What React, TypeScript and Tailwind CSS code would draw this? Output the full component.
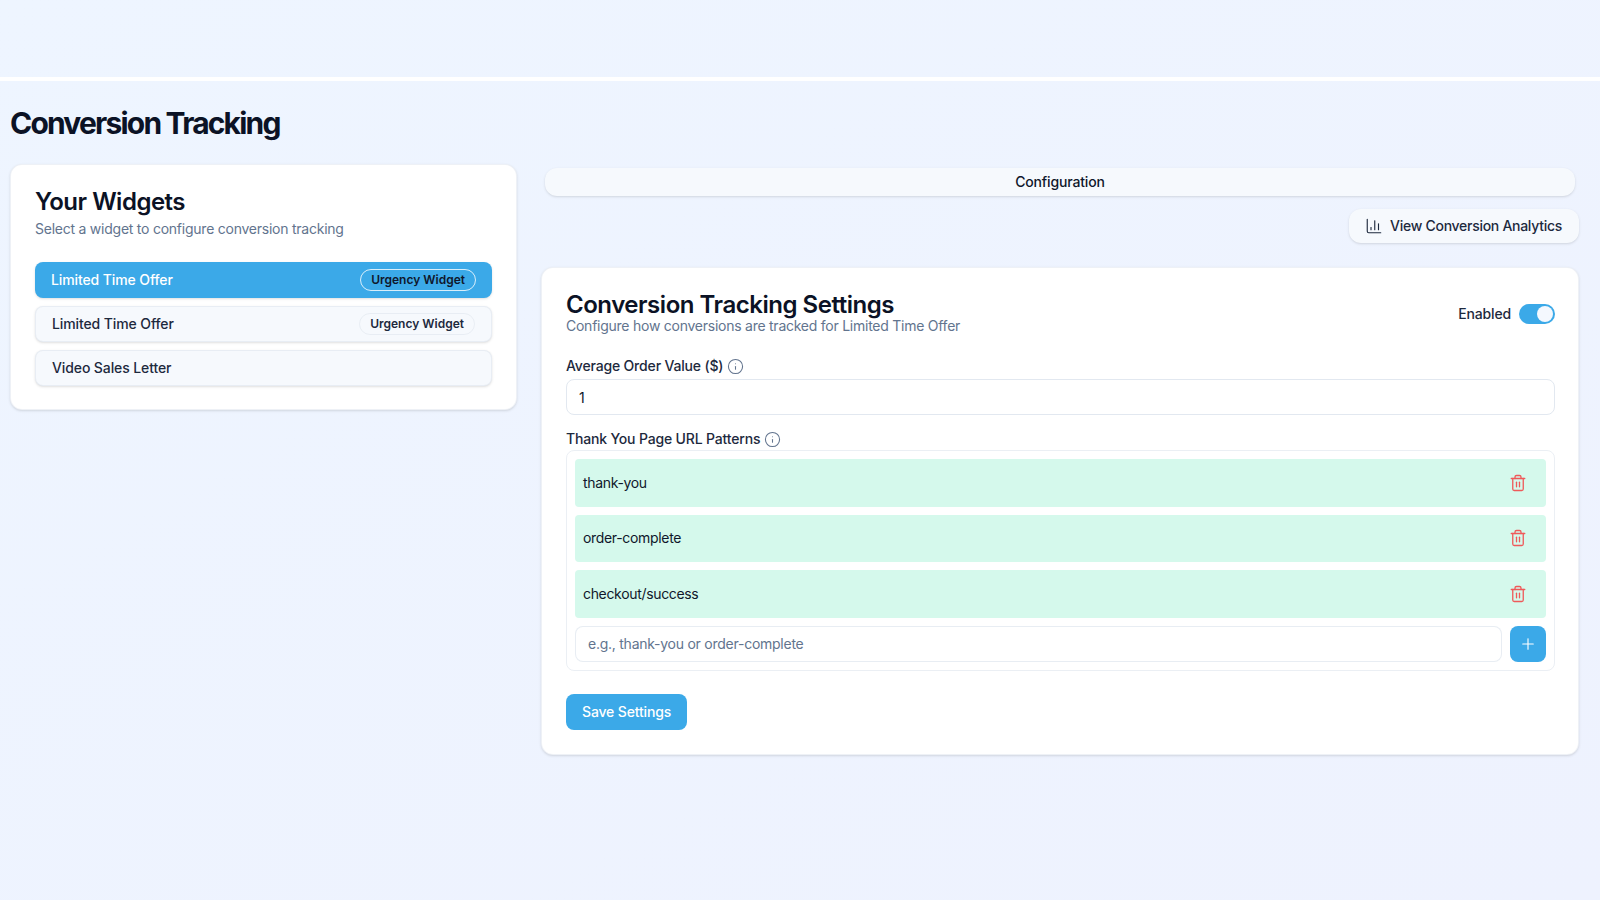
import { ChartColumn, Info, Plus, Trash2 } from "lucide-react";

const patterns = ["thank-you", "order-complete", "checkout/success"];

const FieldLabel = ({ text }: { text: string }) => (
  <div className="flex h-[18px] items-center gap-1 text-sm font-medium tracking-[-0.17px] text-slate-800">
    <span>{text}</span>
    <Info className="size-[17px] text-slate-500" strokeWidth={1.5} />
  </div>
);

const WidgetRow = ({
  name,
  badge,
  active,
}: {
  name: string;
  badge?: string;
  active?: boolean;
}) => (
  <div
    className={
      active
        ? "flex h-9 items-center justify-between rounded-lg bg-[#3ba9e8] px-4 text-sm font-medium tracking-[-0.11px] text-white shadow-sm"
        : "flex h-9 items-center justify-between rounded-lg border border-slate-200/70 bg-[#f6f9fd] px-4 text-sm font-medium tracking-[-0.11px] text-slate-800 shadow-sm"
    }
  >
    <span>{name}</span>
    {badge && (
      <span
        className={
          active
            ? "flex h-[22px] items-center rounded-full border border-white/80 px-[10px] text-xs font-semibold tracking-normal text-slate-900"
            : "flex h-[22px] items-center rounded-full border border-slate-200/70 px-[10px] text-xs font-semibold tracking-normal text-slate-800"
        }
      >
        {badge}
      </span>
    )}
  </div>
);

export default function App() {
  return (
    <div className="min-h-[900px] bg-gradient-to-br from-[#eef5ff] to-[#eef2fe] font-['Inter',sans-serif] text-slate-900">
      <header className="h-[81px] border-b-4 border-white" />
      <main className="pl-[10px] pr-[21px]">
        <h1 className="mt-[24px] text-3xl leading-9 font-bold tracking-[-1.8px] text-[#0b1225]">
          Conversion Tracking
        </h1>
        <div className="mt-[23px] grid grid-cols-[507px_1fr] items-start gap-6">
          <section className="rounded-xl border border-slate-200/60 bg-white px-6 pt-[25px] pb-[23px] shadow-sm">
            <h2 className="text-2xl leading-[24px] font-semibold tracking-[-0.5px] text-[#0b1225]">
              Your Widgets
            </h2>
            <p className="mt-[5px] text-sm leading-5 tracking-[-0.24px] text-slate-500">
              Select a widget to configure conversion tracking
            </p>
            <div className="mt-[23px] flex flex-col gap-2">
              <WidgetRow name="Limited Time Offer" badge="Urgency Widget" active />
              <WidgetRow name="Limited Time Offer" badge="Urgency Widget" />
              <WidgetRow name="Video Sales Letter" />
            </div>
          </section>

          <div className="mt-[4px] flex flex-col">
            <div className="mx-1 flex h-7 items-center justify-center rounded-xl bg-[#f6f9fd] text-sm font-medium tracking-[-0.15px] text-slate-900 shadow-sm">
              Configuration
            </div>
            <div className="mt-[13px] flex justify-end">
              <button className="flex h-[34px] items-center gap-[7px] rounded-xl bg-[#f6f9fd] pl-4 pr-[17px] text-sm font-medium tracking-[-0.28px] text-slate-800 shadow-sm">
                <ChartColumn className="size-[18px]" strokeWidth={1.5} />
                View Conversion Analytics
              </button>
            </div>
            <section className="mt-6 rounded-xl border border-slate-200/60 bg-white pl-6 pr-[23px] pt-[25px] pb-6 shadow-sm">
              <div className="flex items-center justify-between">
                <div>
                  <h2 className="text-2xl leading-[23px] font-semibold tracking-[-0.47px] text-[#0b1225]">
                    Conversion Tracking Settings
                  </h2>
                  <p className="text-sm leading-5 tracking-[-0.25px] text-slate-500">
                    Configure how conversions are tracked for Limited Time Offer
                  </p>
                </div>
                <div className="mb-[2px] flex items-center gap-2">
                  <span className="text-sm font-medium tracking-[-0.15px] text-slate-800">
                    Enabled
                  </span>
                  <span className="flex h-5 w-9 items-center justify-end rounded-full bg-[#3ba9e8] p-[2px]">
                    <span className="size-4 rounded-full bg-[#f4f8fe]" />
                  </span>
                </div>
              </div>

              <div className="mt-[21px]">
                <FieldLabel text="Average Order Value ($)" />
                <input
                  readOnly
                  value="1"
                  className="mt-[4px] block h-9 w-full rounded-lg border border-slate-200 bg-white px-3 text-sm text-slate-900"
                />
              </div>

              <div className="mt-[15px]">
                <FieldLabel text="Thank You Page URL Patterns" />
                <div className="mt-[2px] flex flex-col gap-2 rounded-lg border border-slate-200/70 p-2">
                  {patterns.map((pattern) => (
                    <div
                      key={pattern}
                      className="flex h-[47.5px] items-center justify-between rounded bg-[#d5f9ec] pl-2 pr-[19px] text-sm tracking-[-0.33px] text-slate-900"
                    >
                      <span>{pattern}</span>
                      <Trash2 className="size-[18px] text-[#ef5a5a]" strokeWidth={1.75} />
                    </div>
                  ))}
                  <div className="flex gap-2">
                    <input
                      readOnly
                      placeholder="e.g., thank-you or order-complete"
                      className="h-9 flex-1 rounded-lg border border-slate-200/80 bg-white px-3 text-sm tracking-[-0.25px] placeholder:text-slate-500"
                    />
                    <button className="flex size-9 items-center justify-center rounded-lg bg-[#3ba9e8] text-white">
                      <Plus className="size-[18px]" strokeWidth={1.5} />
                    </button>
                  </div>
                </div>
              </div>

              <button className="mt-[23px] flex h-9 items-center rounded-lg bg-[#3ba9e8] px-4 text-sm font-medium tracking-[-0.15px] text-white">
                Save Settings
              </button>
            </section>
          </div>
        </div>
      </main>
    </div>
  );
}
